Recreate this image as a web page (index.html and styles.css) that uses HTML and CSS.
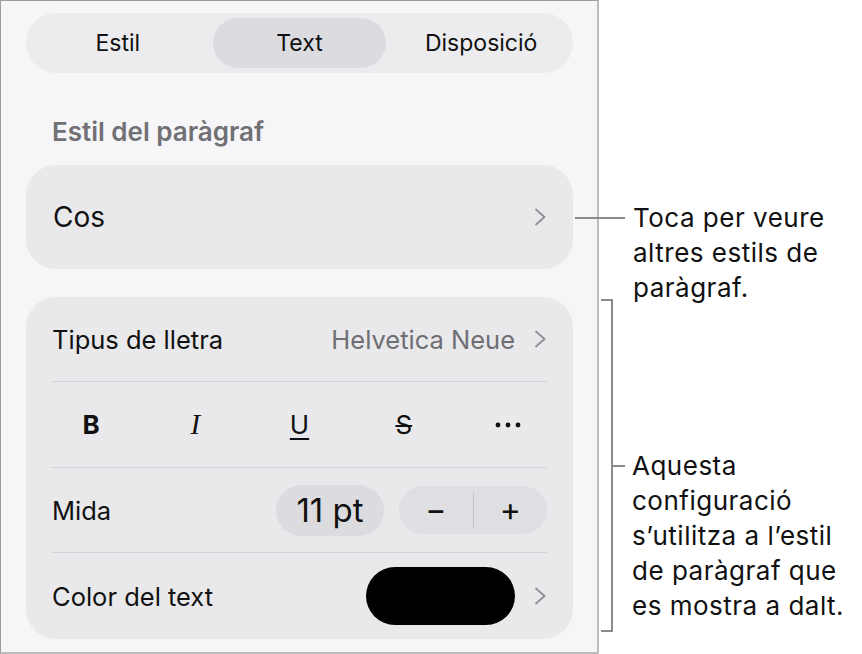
FILE: index.html
```html
<!DOCTYPE html>
<html lang="ca">
  <head>
    <meta charset="UTF-8" />
    <meta name="viewport" content="width=device-width, initial-scale=1.0" />
    <title>Text</title>
    <link rel="stylesheet" href="styles.css">
  </head>
  <body>
    <div class="figure">
      <!-- panell de format -->
      <div class="panel">
        <div class="tabs">
          <div class="tab">Estil</div>
          <div class="tab tab-active">Text</div>
          <div class="tab">Disposició</div>
        </div>

        <div class="section-title">Estil del paràgraf</div>

        <div class="card style-card">
          <span class="style-name">Cos</span>
          <svg class="chevron" width="14" height="20" viewBox="0 0 14 20"><path d="M3 2.5 L11.5 10 L3 17.5" /></svg>
        </div>

        <div class="card font-card">
          <div class="row">
            <span class="label">Tipus de lletra</span>
            <span class="row-end">
              <span class="value">Helvetica Neue</span>
              <svg class="chevron" width="14" height="20" viewBox="0 0 14 20"><path d="M3 2.5 L11.5 10 L3 17.5" /></svg>
            </span>
          </div>
          <div class="row format-row">
            <span class="fmt fmt-bold">B</span>
            <span class="fmt fmt-italic">I</span>
            <span class="fmt fmt-under">U</span>
            <span class="fmt fmt-strike">S</span>
            <span class="fmt fmt-more">
              <svg width="26" height="6" viewBox="0 0 26 6"><circle cx="3" cy="3" r="2.4" /><circle cx="13" cy="3" r="2.4" /><circle cx="23" cy="3" r="2.4" /></svg>
            </span>
          </div>
          <div class="row">
            <span class="label">Mida</span>
            <span class="row-end">
              <span class="size-pill">11 pt</span>
              <span class="stepper">
                <span class="step">−</span>
                <span class="step-sep"></span>
                <span class="step">+</span>
              </span>
            </span>
          </div>
          <div class="row">
            <span class="label">Color del text</span>
            <span class="row-end">
              <span class="swatch"></span>
              <svg class="chevron" width="14" height="20" viewBox="0 0 14 20"><path d="M3 2.5 L11.5 10 L3 17.5" /></svg>
            </span>
          </div>
        </div>
      </div>

      <!-- notes de la dreta -->
      <div class="notes">
        <div class="note note-style">
          <span class="lead"></span>
          <p class="note-text">Toca per veure<br>altres estils de<br>paràgraf.</p>
        </div>
        <div class="note note-group">
          <span class="bracket"></span>
          <div class="note-body">
            <span class="tick"></span>
            <p class="note-text">Aquesta<br>configuració<br>s’utilitza a l’estil<br>de paràgraf que<br>es mostra a dalt.</p>
          </div>
        </div>
      </div>
    </div>
  </body>
</html>
```

FILE: styles.css
```css
body {
  margin: 0;
  padding: 0;
  background: #ffffff;
  font-family: Inter, "Noto Sans", sans-serif;
  color: #111111;
}

.figure {
  display: flex;
  width: 862px;
  height: 654px;
}

/* panell */
.panel {
  box-sizing: border-box;
  width: 599px;
  height: 654px;
  flex-shrink: 0;
  background: #f6f6f8;
  border-top: 1px solid #9c9c9c;
  border-left: 1px solid #9c9c9c;
  border-right: 2px solid #bcbcbc;
  border-bottom: 2px solid #bcbcbc;
  padding: 12px 24px 0 25px;
}

.tabs {
  display: grid;
  grid-template-columns: 1fr 1fr 1fr;
  gap: 8px;
  height: 60px;
  box-sizing: border-box;
  padding: 5px;
  border-radius: 30px;
  background: #ececef;
}

.tab {
  display: flex;
  align-items: center;
  justify-content: center;
  border-radius: 25px;
  font-size: 23px;
}

.tab-active {
  background: #dcdce0;
}

.section-title {
  margin: 46px 0 0 26px;
  height: 26px;
  line-height: 26px;
  font-size: 26px;
  font-weight: 600;
  color: #707075;
}

.card {
  background: #e9e9ec;
  border-radius: 30px;
}

.style-card {
  display: flex;
  align-items: center;
  justify-content: space-between;
  height: 104px;
  margin-top: 20px;
  padding: 0 26px 0 27px;
}

.style-name {
  font-size: 28px;
}

.chevron {
  display: block;
  flex-shrink: 0;
  fill: none;
  stroke: #8f8f94;
  stroke-width: 1.8;
  stroke-linecap: round;
  stroke-linejoin: round;
}

.font-card {
  margin-top: 28px;
  padding: 0 26px;
}

.row {
  display: flex;
  align-items: center;
  justify-content: space-between;
  height: 84px;
  border-bottom: 1px solid #d3d3d7;
}

.row:last-child {
  border-bottom: none;
  height: 86px;
}

.label {
  font-size: 25.5px;
}

.row-end {
  display: flex;
  align-items: center;
  gap: 18px;
}

.value {
  font-size: 25.5px;
  color: #6e6e73;
}

/* botons de format */
.format-row {
  height: 85px;
}

.fmt {
  display: flex;
  justify-content: center;
  width: 78px;
  font-size: 26px;
  color: #111111;
}

.fmt-bold {
  font-weight: 700;
}

.fmt-italic {
  font-family: "Liberation Serif", serif;
  font-style: italic;
  font-size: 29px;
}

.fmt-under {
  text-decoration: underline;
  text-underline-offset: 4px;
  text-decoration-thickness: 2px;
}

.fmt-strike {
  text-decoration: line-through;
  text-decoration-thickness: 2px;
}

.fmt-more svg {
  display: block;
  fill: #111111;
}

/* mida */
.size-pill {
  display: flex;
  align-items: center;
  justify-content: center;
  width: 108px;
  height: 51px;
  border-radius: 26px;
  background: #dcdce0;
  font-size: 33px;
}

.row-end .size-pill + .stepper {
  margin-left: -3px;
}

.stepper {
  display: flex;
  align-items: center;
  width: 148px;
  height: 48px;
  border-radius: 24px;
  background: #dfdfe3;
}

.step {
  flex: 1;
  text-align: center;
  font-size: 32px;
  line-height: 48px;
}

.step-sep {
  width: 1px;
  height: 36px;
  background: #c4c4c8;
}

.swatch {
  display: block;
  width: 149px;
  height: 58px;
  border-radius: 29px;
  background: #000000;
}

/* notes */
.notes {
  display: flex;
  flex-direction: column;
  flex-shrink: 0;
  width: 263px;
}

.note {
  display: flex;
  align-items: flex-start;
}

.note-text {
  margin: 0;
  font-size: 26px;
  line-height: 35px;
  letter-spacing: 0.5px;
  white-space: nowrap;
  color: #111111;
}

.note-style {
  margin-top: 200px;
}

.lead {
  flex-shrink: 0;
  width: 50px;
  height: 2px;
  margin: 17px 8px 0 -24px;
  background: #8a8a8a;
}

.note-group {
  margin-top: -6px;
}

.bracket {
  flex-shrink: 0;
  width: 10px;
  height: 329px;
  margin-left: 2px;
  border: 2px solid #8a8a8a;
  border-left: none;
}

.note-body {
  display: flex;
  align-items: flex-start;
  margin-top: 149px;
}

.tick {
  flex-shrink: 0;
  width: 12px;
  height: 2px;
  margin: 17px 7px 0 0;
  background: #8a8a8a;
}
```
